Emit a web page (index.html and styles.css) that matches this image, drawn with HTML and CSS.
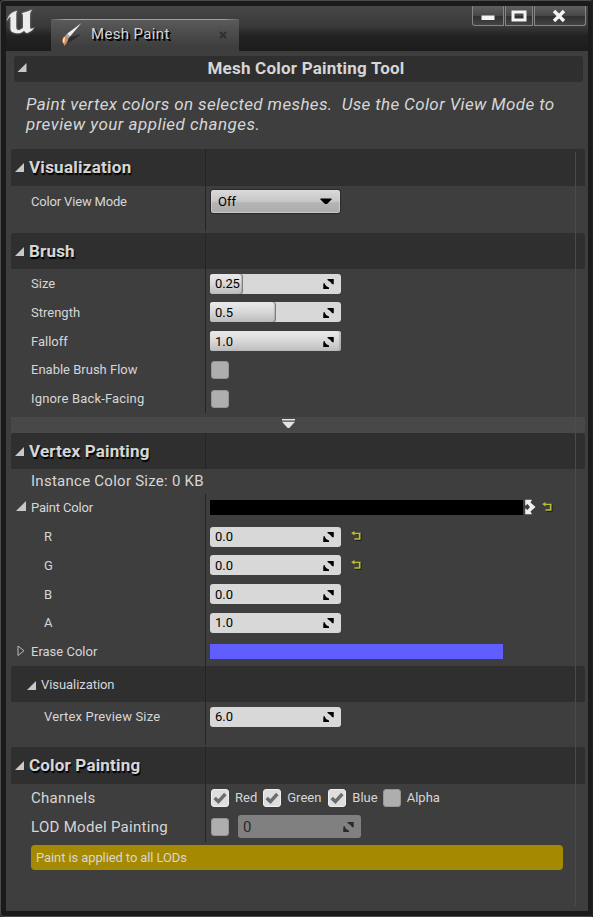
FILE: index.html
```html
<!DOCTYPE html>
<html lang="en">
<head>
<meta charset="utf-8">
<title>Mesh Paint</title>
<link rel="stylesheet" href="styles.css">
</head>
<body>
<svg class="defs" width="0" height="0" aria-hidden="true">
  <symbol id="tri" viewBox="0 0 9 9"><path d="M9 0V9H0Z" fill="#c8c8c8"/></symbol>
  <symbol id="spin" viewBox="0 0 12 12"><path d="M4.500 1H10.500V6.500L9 6Q8 3.800 4.500 2ZM.5 5.300L1.500 5Q2.500 8.500 6 9.500V11H.5Z" fill="currentColor"/><path d="M6 1H10.500V6ZM.5 6.500V11H5.500Z" fill="currentColor"/></symbol>
  <symbol id="undo" viewBox="0 0 11 10"><path d="M3 3.400H9.800V9H4.400" stroke="#161616" fill="none" stroke-width="1.4"/><path d="M2 2.500H8.700V8H3.500" fill="none" stroke="#bcc030" stroke-width="1.7"/><path d="M.2 2L3.500 0V4.500Z" fill="#bcc030"/></symbol>
  <symbol id="check" viewBox="0 0 18 18"><path d="M3 9L7.2 13L15 4.500" fill="none" stroke="#6c6c6c" stroke-width="3.800"/></symbol>
</svg>
<div class="window">
  <header class="titlebar">
    <svg class="logo" viewBox="0 0 30 26"><path d="M.6 12.4C2 6.500 5.500 2.700 11.500 1.700C10.300 3 10.200 4 10.200 5.500V18C10.200 20.500 11.500 21.600 13.500 21L17 19V6.500C17 5 16.500 4.500 15.300 4.200C19 3.600 22.500 2.600 26.300 .6C24.500 2.600 24 4 24 6V18C24 20 25 20.600 28.500 18.300C26.700 21.500 24 23.300 20.500 24.300L18 21.700C15.500 24.300 11 25.500 6.200 23C4.700 22.200 4.500 20.500 4.500 19V8.500C4.500 6.700 2.800 8 .6 12.400Z" fill="#ececec"/></svg>
    <div class="tab">
      <svg class="brush" viewBox="0 0 24 25"><path d="M7 21Q13 19 21 12Q18 13 10 15Z" fill="#222" opacity=".7"/><path d="M21.500 1L10 14.500L7 11.800Z" fill="#eee"/><path d="M7 11.800L10 14.500L8.200 16.500L5.300 13.800Z" fill="#a9b0b0"/><path d="M5.300 13.800L8.200 16.500Q8 20 4.300 24Q4.300 22 2.500 20.500Q1.500 16 5.300 13.800Z" fill="#d78b5b"/><path d="M5 15.500Q3 17 4 20.500" fill="none" stroke="#f9dfc8" stroke-width="1.500"/></svg>
      <span class="tab-name">Mesh Paint</span>
      <svg class="tab-close" viewBox="0 0 8 8"><path d="M1 1L7 7M7 1L1 7" stroke="#242424" stroke-width="2"/></svg>
    </div>
    <div class="controls">
      <div class="ctl min"><svg width="14" height="6"><rect x=".5" y=".5" width="13" height="4.500" fill="#f4f4f4"/></svg></div>
      <div class="ctl max"><svg width="16" height="12"><path d="M2 2H14V10H2Z" fill="none" stroke="#f4f4f4" stroke-width="3"/></svg></div>
      <div class="ctl close"><svg width="14" height="14"><path d="M2 2L12 12M12 2L2 12" stroke="#f4f4f4" stroke-width="3.400"/></svg></div>
    </div>
  </header>
  <main class="panel">
    <div class="tool-head"><svg class="tri"><use href="#tri"/></svg><h1>Mesh Color Painting Tool</h1></div>
    <p class="intro">Paint vertex colors on selected meshes.&nbsp; Use the Color View Mode to<br><span class="intro-end">preview your applied changes.</span></p>

    <div class="details">
      <section class="group visual">
        <div class="row head"><h2 class="name"><svg class="tri"><use href="#tri"/></svg>Visualization</h2><div class="value"></div></div>
        <div class="row mode"><div class="name tight">Color View Mode</div><div class="value"><div class="combo">Off<svg width="12" height="7"><path d="M.5 .5H11.500V1.500L7 6H5L.5 1.500Z"/></svg></div></div></div>
      </section>

      <section class="group">
        <div class="row head"><h2 class="name"><svg class="tri"><use href="#tri"/></svg>Brush</h2><div class="value"></div></div>
        <div class="row short"><div class="name">Size</div><div class="value"><div class="num tight"><i class="fill" style="width:25%"></i><span>0.25</span><svg class="spin"><use href="#spin"/></svg></div></div></div>
        <div class="row low"><div class="name">Strength</div><div class="value"><div class="num"><i class="fill" style="width:50%"></i><span>0.5</span><svg class="spin"><use href="#spin"/></svg></div></div></div>
        <div class="row low"><div class="name">Falloff</div><div class="value"><div class="num"><i class="fill" style="width:100%"></i><span>1.0</span><svg class="spin"><use href="#spin"/></svg></div></div></div>
        <div class="row"><div class="name">Enable Brush Flow</div><div class="value"><div class="box"></div></div></div>
        <div class="row"><div class="name loose">Ignore Back-Facing</div><div class="value"><div class="box"></div></div></div>
        <div class="advanced"><svg width="14" height="10"><path d="M0 0H13V1.500H0ZM0 2.800H13L7.300 9H5.700Z" fill="#e4e4e4"/></svg></div>
      </section>

      <section class="group">
        <div class="row head vertex"><h2 class="name"><svg class="tri"><use href="#tri"/></svg>Vertex Painting</h2><div class="value"></div></div>
        <div class="instance">Instance Color Size: 0 KB</div>
        <div class="row short color"><div class="name expand tight"><svg class="tri"><use href="#tri"/></svg>Paint Color</div><div class="value"><div class="swatch black"></div><svg class="swap" viewBox="0 0 12 16"><path d="M1.200 .8H8L6.500 3.500L11.500 8L6.500 12.500L8 15.200H1.200V9.300L3.500 11L6 8L3.500 5L1.200 6.700Z" fill="#eee"/></svg><svg class="undo"><use href="#undo"/></svg></div></div>
        <div class="row short sub"><div class="name">R</div><div class="value"><div class="num"><span>0.0</span><svg class="spin"><use href="#spin"/></svg></div><svg class="undo"><use href="#undo"/></svg></div></div>
        <div class="row sub low"><div class="name">G</div><div class="value"><div class="num"><span>0.0</span><svg class="spin"><use href="#spin"/></svg></div><svg class="undo"><use href="#undo"/></svg></div></div>
        <div class="row sub low"><div class="name">B</div><div class="value"><div class="num"><span>0.0</span><svg class="spin"><use href="#spin"/></svg></div></div></div>
        <div class="row sub"><div class="name">A</div><div class="value"><div class="num"><span>1.0</span><svg class="spin"><use href="#spin"/></svg></div></div></div>
        <div class="row erase"><div class="name expand"><svg class="closed" viewBox="0 0 8 12"><path d="M1 1L7 5.700L1 10.500Z" fill="none" stroke="#bbb"/></svg>Erase Color</div><div class="value"><div class="swatch blue"></div></div></div>
        <div class="row head subhead"><h3 class="name"><svg class="tri"><use href="#tri"/></svg>Visualization</h3><div class="value"></div></div>
        <div class="row preview sub"><div class="name loose">Vertex Preview Size</div><div class="value"><div class="num"><span>6.0</span><svg class="spin"><use href="#spin"/></svg></div></div></div>
      </section>

      <section class="group painting">
        <div class="row head tall"><h2 class="name"><svg class="tri"><use href="#tri"/></svg>Color Painting</h2><div class="value"></div></div>
        <div class="row large channels"><div class="name">Channels</div><div class="value">
          <label><span class="box on"><svg><use href="#check"/></svg></span>Red</label>
          <label><span class="box on"><svg><use href="#check"/></svg></span>Green</label>
          <label><span class="box on"><svg><use href="#check"/></svg></span>Blue</label>
          <label><span class="box"></span>Alpha</label>
        </div></div>
        <div class="row large lod"><div class="name">LOD Model Painting</div><div class="value"><div class="box"></div><div class="num disabled"><span>0</span><svg class="spin"><use href="#spin"/></svg></div></div></div>
        <div class="notice">Paint is applied to all LODs</div>
      </section>
      <div class="scroll-track"></div>
    </div>
  </main>
</div>
</body>
</html>
```
FILE: styles.css
```css
* { box-sizing: border-box; }
body { margin: 0; background: #1b1b1b; color: #d6d6d6; font: 13px/20px Roboto, "Liberation Sans", sans-serif; }
h1, h2, h3, p { margin: 0; }
svg { display: block; flex: none; }
.defs { position: absolute; }

.window { width: 593px; height: 917px; padding: 5px 4px 5px 5px; border: 1px solid #4b4b4b; border-right-color: #222; border-radius: 4px 4px 3px 3px; background: #1b1b1b; display: flex; flex-direction: column; }

/* Title bar */
.titlebar { height: 45px; flex: none; display: flex; align-items: flex-start; background: linear-gradient(#474747, #393939 45%, #222 66%, #1c1c1c); }
.logo { width: 30px; height: 26px; margin: 3px 0 0 0; filter: drop-shadow(0 0 1px #888); }
.tab { width: 188px; height: 32px; margin: 13px 0 0 15px; padding: 0 12px 0 9px; display: flex; align-items: center; background: linear-gradient(90deg, transparent, #b7a936 8%, #b7a936 92%, transparent) 0 0 / 100% 1px no-repeat, linear-gradient(#5b5b5b, #3e3e3e 85%); }
.brush { width: 24px; height: 25px; margin-top: -2px; }
.tab-name { margin: -3px 0 0 7px; flex: 1; font-size: 15px; letter-spacing: .35px; text-shadow: 1px 1px 1px #000, 2px 2px 0 #000; }
.tab-close { width: 8px; height: 8px; margin-top: -1px; opacity: .7; }
.controls { margin-left: auto; margin-right: 2px; display: flex; gap: 1px; }
.ctl { height: 20px; display: flex; align-items: center; justify-content: center; border: 1px solid #858585; border-top: 0; background: linear-gradient(#606060, #484848 50%, #303030 55%, #444); }
.min { width: 32px; border-bottom-left-radius: 3px; }
.min svg { margin-top: 4px; }
.max { width: 28px; }
.close { width: 52px; border-bottom-right-radius: 3px; }
.close svg { margin-right: 3px; }

/* Panel */
.panel { height: 860px; background: #3e3e3e; padding: 5px 3px 0 5px; }
.tool-head { height: 26px; margin: 0 2px 0 3px; padding-left: 3px; display: flex; align-items: center; background: #2f2f2f; border-radius: 3px; }
.tool-head h1 { flex: 1; margin-top: -2px; padding-left: 2px; text-align: center; font-size: 17px; font-weight: 700; letter-spacing: .22px; }
.tri { width: 9px; height: 9px; }
.tool-head .tri { width: 10px; margin-top: -3px; }
.intro { height: 67px; padding: 12px 0 0 15px; font-size: 17px; font-style: italic; letter-spacing: .37px; white-space: nowrap; }
.intro-end { letter-spacing: .46px; }
.details { position: relative; }
.scroll-track { position: absolute; top: 3px; right: 9px; width: 1px; height: 754px; background: #4b4b4b; }

/* Rows */
.row { height: 29px; display: flex; }
.row.short { height: 28px; }
.name { width: 194px; padding: 5px 0 0 20px; white-space: nowrap; }
.value { flex: 1; padding: 5px 0 0 4px; border-left: 1px solid #242424; display: flex; align-items: flex-start; }
.head { height: 36px; background: #2f2f2f; border-radius: 3px 3px 0 0; }
.visual .head, .head.tall { height: 37px; }
.head .name { display: flex; align-items: center; padding: 0 0 0 4px; font-size: 17px; font-weight: 700; gap: 5px; letter-spacing: .18px; text-shadow: 1px 2px 1px #000; }
.visual .head .name, .tall .name { padding-bottom: 2px; }
.visual .head .name { letter-spacing: .26px; }
.head .name .tri { margin-top: 1px; }
.head.subhead .name { padding: 1px 0 0 16px; font-size: 13px; font-weight: 400; letter-spacing: -.06px; text-shadow: none; }
.tight { letter-spacing: -.17px; }
.loose { letter-spacing: .16px; }
.low .name { padding-top: 6px; }
.low .num span { top: 1px; }
.low .spin { top: .5px; }
.mode { height: 45px; margin-bottom: 2px; }
.sub .name { padding-left: 33px; }
.instance { height: 25px; padding: 2px 0 0 20px; font-size: 15px; letter-spacing: .26px; }
.expand { display: flex; align-items: flex-start; padding: 4px 0 0 5px; }
.erase .expand { padding-top: 5px; }
.expand .tri { width: 10px; height: 10px; margin: 3px 5px 0 0; }
.closed { width: 8px; height: 12px; margin: 3px 6px 0 1px; }
.preview { height: 43px; margin-bottom: 2px; }
.large .name { font-size: 15px; letter-spacing: .3px; padding-top: 4px; }

/* Controls */
.combo { width: 131px; height: 25px; padding: 0 8px 0 7px; display: flex; align-items: center; justify-content: space-between; color: #000; border: 1px solid #292929; border-radius: 3px; background: linear-gradient(#dadada, #c6c6c6 50%, #b4b4b4 56%, #adadad); box-shadow: inset 0 0 0 1px #dedede88; }
.mode .combo { margin-top: 3px; margin-left: 0; }
.mode .value { padding-top: 0; }
.mode .name { padding-top: 6px; }
.num { position: relative; width: 131px; height: 20px; padding: 0 6px 0 5px; display: flex; align-items: center; justify-content: space-between; border-radius: 3px; color: #000; background: #d8d8d8; }
.num span, .spin { position: relative; }
.spin { width: 12px; height: 12px; }
.fill { position: absolute; left: 0; top: 0; height: 100%; border-radius: 3px; background: linear-gradient(#ebebeb, #d8d8d8 50%, #bcbcbc); box-shadow: inset -2px 0 1px #8886, inset -1px 0 0 #777; }
.fill[style*="100%"] { box-shadow: inset -2px 0 1px #8886; }
.box { display: block; width: 18px; height: 18px; margin: 1px 0 0 1px; border: 1px solid #959595; border-radius: 3px; background: #aeaeae; }
.box.on { background: #dedede; border-color: #eee; }
.box svg { width: 16px; height: 16px; }
.advanced { height: 16px; margin-top: 4px; padding: 2px 0 0 271px; background: #484848; border-radius: 0 3px 3px 0; }
.swatch { height: 15px; margin-top: 1px; }
.black { width: 313px; background: #000; }
.blue { width: 293px; background: #605eff; margin-top: 2px; }
.swap { width: 12px; height: 16px; margin: 0 7px 0 1px; }
.undo { width: 11px; height: 10px; }
.color .undo { margin: 3px 0 0 -1px; }
.num + .undo { margin: 4px 0 0 10px; }
.low .num + .undo { margin-top: 5px; }

/* Channels, LOD */
.channels label { display: flex; align-items: center; gap: 6px; height: 18px; margin-right: 6px; }
.channels label:nth-child(2) { margin-right: 7px; }
.channels label:nth-child(3) { margin-right: 5px; }
.channels .box { margin: 0; }
.channels .value { padding-left: 5px; }
.lod .value { padding-top: 2px; }
.lod .box { margin-top: 3px; }
.disabled { width: 123px; height: 23px; margin-left: 9px; font-size: 15px; background: #808080; color: #2a2a2a; }
.notice { height: 25px; width: 532px; margin: 3px 0 0 20px; padding: 3px 5px; border-radius: 4px; background: #a58900; letter-spacing: -.1px; }
```
